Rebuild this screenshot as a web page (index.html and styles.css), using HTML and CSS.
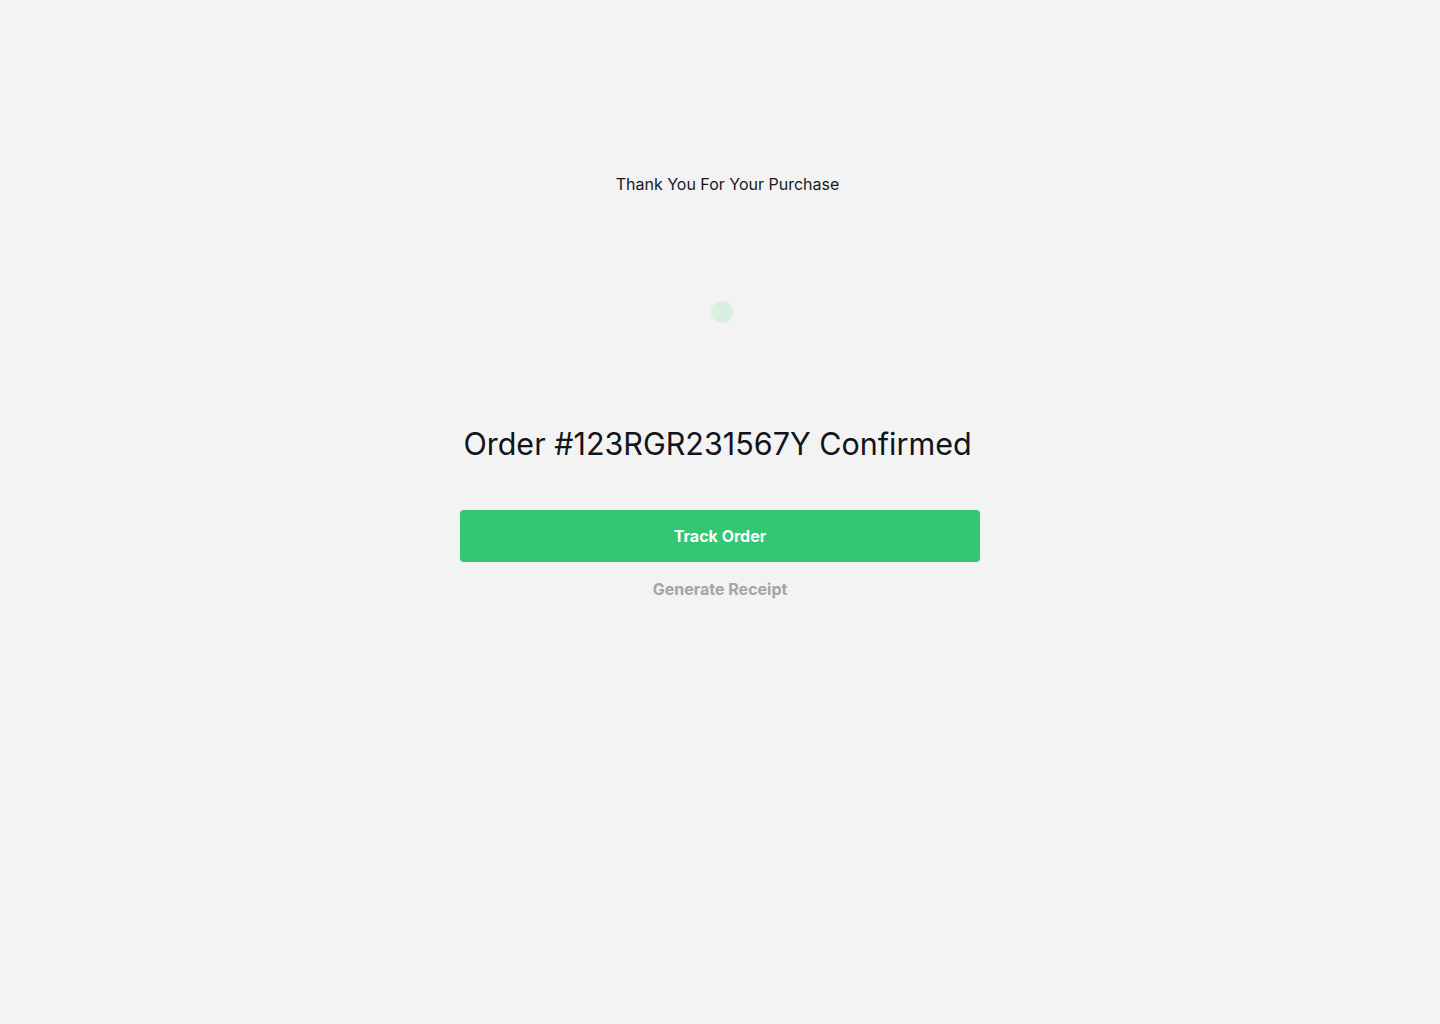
FILE: index.html
```html
<!DOCTYPE html>
<html lang="en">
<head>
<meta charset="utf-8">
<title>Order Confirmed</title>
<link rel="stylesheet" href="styles.css">
</head>
<body>
<main class="page">
  <p class="thanks">Thank You For Your Purchase</p>
  <div class="dot"></div>
  <h1 class="title">Order #123RGR231567Y Confirmed</h1>
  <div class="actions">
    <button class="btn-primary">Track Order</button>
    <button class="btn-link">Generate Receipt</button>
  </div>
</main>
</body>
</html>
```
FILE: styles.css
```css
* { box-sizing: border-box; }
html, body {
  margin: 0;
  padding: 0;
  background: #f3f3f3;
  font-family: Inter, "Noto Sans", sans-serif;
  color: #11141a;
}
.page {
  width: 1440px;
  height: 1024px;
  display: flex;
  flex-direction: column;
  align-items: center;
}
.thanks {
  margin: 174px 0 0 15px;
  font-size: 16px;
  line-height: 20px;
  color: #17191c;
}
.dot {
  margin: 107px 0 0 4px;
  width: 22px;
  height: 22px;
  border-radius: 50%;
  background: #d8efe1;
}
.title {
  margin: 103px 0 0 -5px;
  font-size: 30.5px;
  line-height: 36px;
  font-weight: 400;
  color: #11141a;
  letter-spacing: 0;
}
.actions {
  margin-top: 48px;
  display: flex;
  flex-direction: column;
  align-items: center;
  gap: 17px;
}
.btn-primary {
  width: 520px;
  height: 52px;
  border: none;
  border-radius: 4px;
  background: #34c773;
  color: #ffffff;
  font-family: Inter, "Noto Sans", sans-serif;
  font-size: 16px;
  font-weight: 700;
  cursor: pointer;
}
.btn-link {
  border: none;
  background: none;
  padding: 0;
  font-family: Inter, "Noto Sans", sans-serif;
  font-size: 16px;
  line-height: 20px;
  font-weight: 700;
  color: #a3a5a6;
  cursor: pointer;
}
```
